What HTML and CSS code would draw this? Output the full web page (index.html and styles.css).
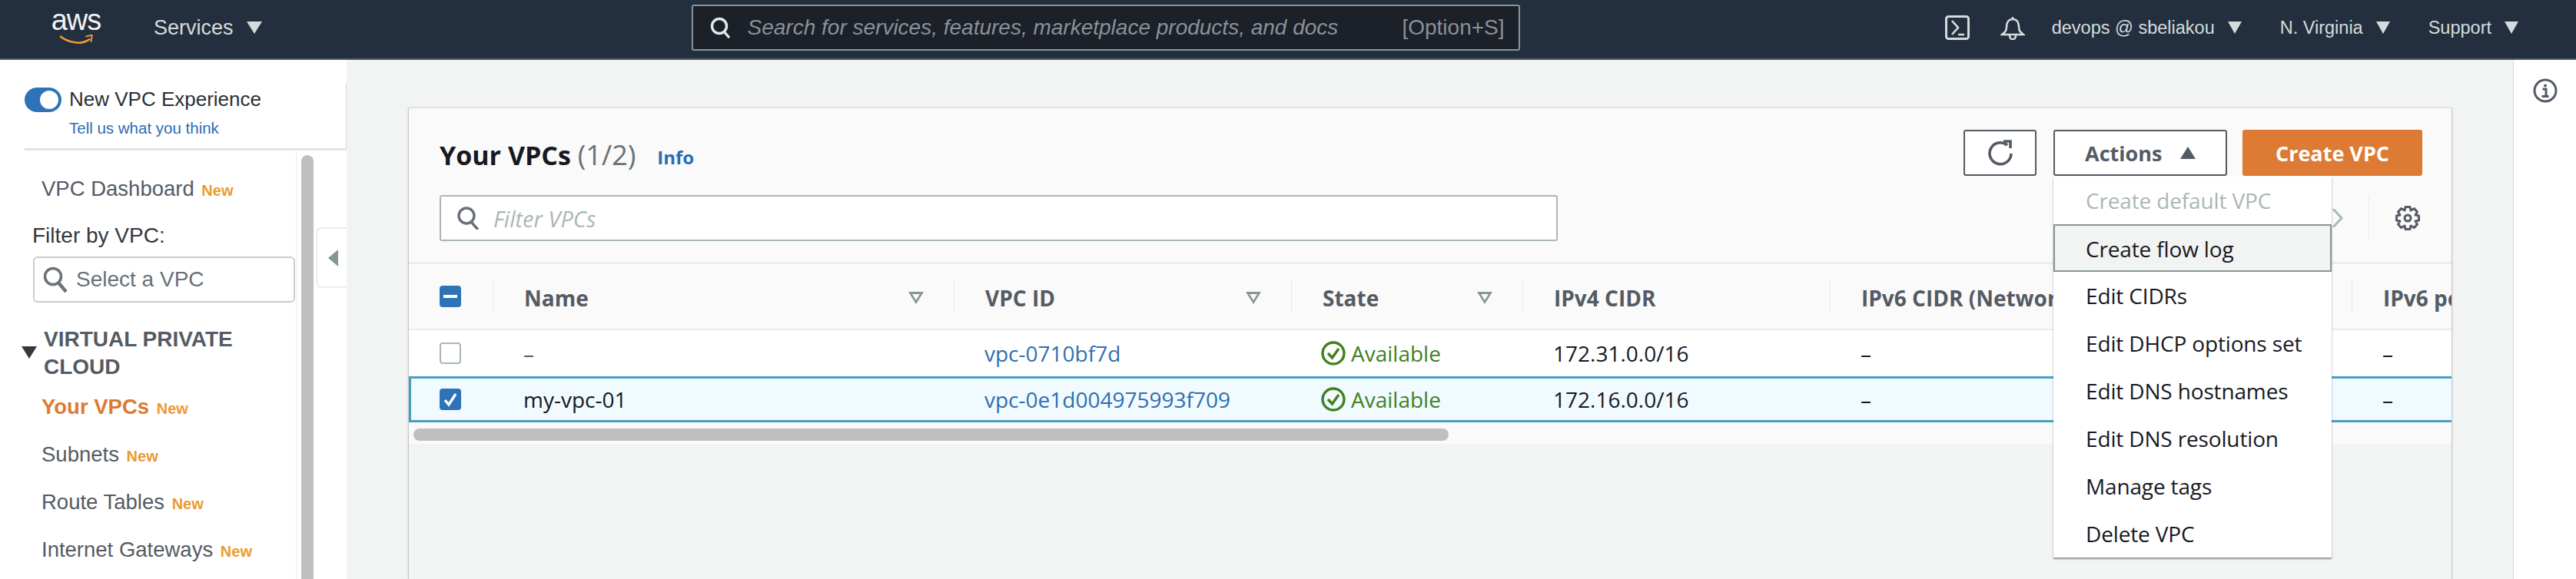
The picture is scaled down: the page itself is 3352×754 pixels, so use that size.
FILE: index.html
```html
<!DOCTYPE html>
<html lang="en">
<head>
    <meta charset="UTF-8">
    <meta name="viewport" content="width=device-width, initial-scale=1.0">
    <title>VPC Management Console</title>
    <link rel="stylesheet" href="styles.css">
</head>
<body>
    <header class="topbar">
        <a class="logo">
            <span class="logo-text">aws</span>
            <svg class="logo-smile" viewBox="0 0 66 20" width="66" height="20">
                <path d="M1 3 C14 14 32 18 45 16 C51 15 56 13 61 9" fill="none" stroke="#ec9a32" stroke-width="4"/>
                <path d="M52 4 L65 1 L63 15" fill="none" stroke="#ec9a32" stroke-width="3"/>
            </svg>
        </a>
        <span class="nav-link services">Services <i class="caret caret-big"></i></span>
        <div class="search">
            <svg class="search-icon" viewBox="0 0 28 28" width="28" height="28">
                <circle cx="12" cy="12" r="9.5" fill="none" stroke="#e4e8e8" stroke-width="3.4"/>
                <path d="M18 19 L25 27" stroke="#e4e8e8" stroke-width="3.4"/>
            </svg>
            <span class="search-text">Search for services, features, marketplace products, and docs</span>
            <span class="search-key">[Option+S]</span>
        </div>
        <div class="topbar-right">
            <svg class="top-icon" viewBox="0 0 32 32" width="32" height="32">
                <rect x="1.5" y="1.5" width="29" height="29" rx="3" fill="none" stroke="#d5dbdb" stroke-width="3"/>
                <path d="M9 7 L17 16 L9 25 M17 25 H25" fill="none" stroke="#d5dbdb" stroke-width="2.6"/>
            </svg>
            <svg class="top-icon bell" viewBox="0 0 32 32" width="32" height="32">
                <path d="M16 2 V5 M16 5 C10 5 8 10 8 15 C8 20 6 22 2 25 H30 C26 22 24 20 24 15 C24 10 22 5 16 5 Z" fill="none" stroke="#d5dbdb" stroke-width="2.6"/>
                <path d="M12 26 C12 33 20 33 20 26" fill="none" stroke="#d5dbdb" stroke-width="2.6"/>
            </svg>
            <span class="nav-link user">devops @ sbeliakou <i class="caret"></i></span>
            <span class="nav-link region">N. Virginia <i class="caret"></i></span>
            <span class="nav-link support">Support <i class="caret"></i></span>
        </div>
    </header>

    <div class="page">
        <aside class="sidebar">
            <div class="experience">
                <span class="toggle"></span>
                <div>
                    <div class="experience-title">New VPC Experience</div>
                    <a class="experience-link">Tell us what you think</a>
                </div>
            </div>
            <div class="side-body">
                <nav class="side-nav">
                    <a class="side-item">VPC Dashboard <span class="new">New</span></a>
                    <div class="filter-label">Filter by VPC:</div>
                    <div class="vpc-select">
                        <svg viewBox="0 0 34 34" width="34" height="34">
                            <circle cx="14" cy="13" r="10.5" fill="none" stroke="#6b7278" stroke-width="3.6"/>
                            <path d="M21 21 L31 33" stroke="#6b7278" stroke-width="4.4"/>
                        </svg>
                        <span>Select a VPC</span>
                    </div>
                    <div class="side-section"><i class="section-caret"></i>VIRTUAL PRIVATE<br>CLOUD</div>
                    <a class="side-item active">Your VPCs <span class="new">New</span></a>
                    <a class="side-item">Subnets <span class="new">New</span></a>
                    <a class="side-item">Route Tables <span class="new">New</span></a>
                    <a class="side-item">Internet Gateways <span class="new">New</span></a>
                </nav>
                <div class="side-scroll"></div>
            </div>
            <div class="collapse-tab"><i></i></div>
        </aside>

        <main class="main">
            <section class="card">
                <div class="card-head">
                    <div class="title-row">
                        <h1 class="title">Your VPCs <span class="count">(1/2)</span></h1>
                        <a class="info">Info</a>
                        <div class="actions">
                            <button class="btn btn-icon">
                                <svg viewBox="0 0 34 34" width="34" height="34">
                                    <path d="M26 7 A14 14 0 1 0 31 18" fill="none" stroke="#545b64" stroke-width="3.6"/>
                                    <path d="M21 2 H30 V11" fill="none" stroke="#545b64" stroke-width="3.6"/>
                                </svg>
                            </button>
                            <div class="actions-wrap">
                                <button class="btn btn-actions">Actions <i class="caret-up"></i></button>
                                <ul class="menu">
                                    <li class="menu-item disabled">Create default VPC</li>
                                    <li class="menu-item hover">Create flow log</li>
                                    <li class="menu-item">Edit CIDRs</li>
                                    <li class="menu-item">Edit DHCP options set</li>
                                    <li class="menu-item">Edit DNS hostnames</li>
                                    <li class="menu-item">Edit DNS resolution</li>
                                    <li class="menu-item">Manage tags</li>
                                    <li class="menu-item">Delete VPC</li>
                                </ul>
                            </div>
                            <button class="btn btn-primary">Create VPC</button>
                        </div>
                    </div>
                    <div class="filter-row">
                        <div class="filter">
                            <svg viewBox="0 0 30 30" width="30" height="30">
                                <circle cx="13" cy="12" r="10" fill="none" stroke="#687078" stroke-width="3.4"/>
                                <path d="M19 20 L28 30" stroke="#687078" stroke-width="3.4"/>
                            </svg>
                            <span>Filter VPCs</span>
                        </div>
                        <div class="pager">
                            <svg viewBox="0 0 14 24" width="14" height="24">
                                <path d="M1 0 L12 12 L1 24" fill="none" stroke="#aab7b8" stroke-width="3"/>
                            </svg>
                            <span class="pager-sep"></span>
                            <svg class="gear" viewBox="0 0 32 32" width="32" height="32">
                                <circle cx="16" cy="16" r="4" fill="none" stroke="#545b64" stroke-width="3"/>
                                <path d="M13 1.5 H19 L20 6 L24.500 3.500 L28.500 8 L26 12 L30.500 13 V19 L26 20 L28.500 24 L24.500 28.500 L20 26 L19 30.500 H13 L12 26 L7.500 28.500 L3.500 24 L6 20 L1.500 19 V13 L6 12 L3.500 8 L7.500 3.500 L12 6 Z" fill="none" stroke="#545b64" stroke-width="3" stroke-linejoin="round"/>
                            </svg>
                        </div>
                    </div>
                </div>

                <div class="table-wrap">
                    <table class="table">
                        <colgroup>
                            <col class="col-check">
                            <col class="col-name">
                            <col class="col-id">
                            <col class="col-state">
                            <col class="col-ipv4">
                            <col class="col-ipv6">
                            <col class="col-pool">
                        </colgroup>
                        <thead>
                            <tr>
                                <th><span class="check check-mixed"><i></i></span></th>
                                <th><div class="th-in">Name <i class="sort"></i></div></th>
                                <th><div class="th-in">VPC ID <i class="sort"></i></div></th>
                                <th><div class="th-in">State <i class="sort"></i></div></th>
                                <th><div class="th-in">IPv4 CIDR</div></th>
                                <th><div class="th-in">IPv6 CIDR (Network border group)</div></th>
                                <th><div class="th-in">IPv6 pool</div></th>
                            </tr>
                        </thead>
                        <tbody>
                            <tr>
                                <td><span class="check"></span></td>
                                <td class="muted">–</td>
                                <td><a class="link">vpc-0710bf7d</a></td>
                                <td>
                                    <span class="state">
                                        <svg viewBox="0 0 32 32" width="32" height="32">
                                            <circle cx="16" cy="16" r="14" fill="none" stroke="#41801f" stroke-width="3.4"/>
                                            <path d="M9 16 L14.500 22 L23 10" fill="none" stroke="#41801f" stroke-width="3.4"/>
                                        </svg>
                                        Available
                                    </span>
                                </td>
                                <td>172.31.0.0/16</td>
                                <td>–</td>
                                <td>–</td>
                            </tr>
                            <tr class="selected">
                                <td><span class="check check-on">
                                    <svg viewBox="0 0 28 28" width="28" height="28">
                                        <path d="M7 15 L12 21 L21 7" fill="none" stroke="#fff" stroke-width="3.4"/>
                                    </svg>
                                </span></td>
                                <td>my-vpc-01</td>
                                <td><a class="link">vpc-0e1d004975993f709</a></td>
                                <td>
                                    <span class="state">
                                        <svg viewBox="0 0 32 32" width="32" height="32">
                                            <circle cx="16" cy="16" r="14" fill="none" stroke="#41801f" stroke-width="3.4"/>
                                            <path d="M9 16 L14.500 22 L23 10" fill="none" stroke="#41801f" stroke-width="3.4"/>
                                        </svg>
                                        Available
                                    </span>
                                </td>
                                <td>172.16.0.0/16</td>
                                <td>–</td>
                                <td>–</td>
                            </tr>
                        </tbody>
                    </table>
                    <div class="hscroll"><div class="hscroll-thumb"></div></div>
                </div>
            </section>
        </main>

        <aside class="help">
            <svg viewBox="0 0 32 32" width="32" height="32">
                <circle cx="16" cy="16" r="14" fill="none" stroke="#545b64" stroke-width="3"/>
                <circle cx="16" cy="9.500" r="2" fill="#545b64"/>
                <path d="M12.500 14 H17 V23 M11.500 23.500 H20.500" fill="none" stroke="#545b64" stroke-width="3"/>
            </svg>
        </aside>
    </div>
</body>
</html>
```

FILE: styles.css
```css
* {
    box-sizing: border-box;
}

html,
body {
    margin: 0;
    height: 754px;
    overflow: hidden;
}

body {
    font-family: "Liberation Sans", Arial, sans-serif;
    font-size: 28px;
    color: #16191f;
    background-color: #f2f3f3;
}

/* top bar */
.topbar {
    display: flex;
    align-items: center;
    height: 78px;
    padding: 0 75px 4px 66px;
    background-color: #232f3e;
    border-bottom: 2px solid #545b64;
}

.logo {
    display: flex;
    flex-direction: column;
    align-items: center;
    width: 66px;
    height: 44px;
}

.logo-text {
    height: 24px;
    font-size: 38px;
    line-height: 24px;
    letter-spacing: -1px;
    color: #f2f3f3;
}

.logo-smile {
    margin-top: 7px;
}

.nav-link {
    display: flex;
    align-items: center;
    gap: 17px;
    font-size: 23.5px;
    color: #d5dbdb;
    white-space: nowrap;
}

.services {
    gap: 17px;
    margin-left: 68px;
    font-size: 27px;
}

.caret {
    display: inline-block;
    border-left: 9px solid transparent;
    border-right: 9px solid transparent;
    border-top: 16px solid #d5dbdb;
}

.caret-big {
    border-left-width: 10px;
    border-right-width: 10px;
}

.search {
    display: flex;
    align-items: center;
    width: 1078px;
    height: 60px;
    margin-left: 559px;
    padding: 0 18px 0 22px;
    font-size: 28px;
    color: #8b9195;
    background-color: #1b2029;
    border: 2px solid #879596;
    border-radius: 3px;
}

.search-icon {
    flex: none;
}

.search-text {
    margin-left: 21px;
    font-style: italic;
    white-space: nowrap;
}

.search-key {
    margin-left: auto;
    white-space: nowrap;
}

.topbar-right {
    display: flex;
    align-items: center;
    margin-left: auto;
}

.bell {
    margin-left: 40px;
}

.user {
    margin-left: 35px;
}

.region {
    margin-left: 50px;
}

.support {
    margin-left: 50px;
}

/* page columns */
.page {
    display: flex;
    height: 676px;
}

.sidebar {
    position: relative;
    flex: none;
    width: 451px;
    background-color: #ffffff;
}

.main {
    flex: 1;
    min-width: 0;
    padding: 63px 79px 0 80px;
    border-right: 1px solid #d5dbdb;
}

.help {
    flex: none;
    width: 81px;
    padding: 24px 0 0 25px;
    background-color: #ffffff;
}

/* sidebar */
.experience {
    display: flex;
    gap: 10px;
    height: 86px;
    margin: 30px 0 0 32px;
    border-right: 1px solid #d5dbdb;
}

.toggle {
    position: relative;
    flex: none;
    width: 48px;
    height: 32px;
    margin-top: 6px;
    background-color: #2e73b8;
    border-radius: 16px;
}

.toggle::after {
    content: "";
    position: absolute;
    top: 4px;
    right: 4px;
    width: 24px;
    height: 24px;
    background-color: #ffffff;
    border-radius: 50%;
}

.experience-title {
    margin-top: 5px;
    font-size: 26px;
    color: #2b2f36;
    line-height: 32px;
}

.experience-link {
    display: block;
    margin-top: 9px;
    font-size: 20.5px;
    line-height: 26px;
    color: #2b6cb4;
}

.side-body {
    display: flex;
    height: 560px;
    margin-left: 0;
}

.side-body::before {
    content: "";
    position: absolute;
    top: 115px;
    left: 32px;
    right: 0;
    height: 3px;
    background-color: #e1e3e3;
}

.side-nav {
    flex: none;
    width: 386px;
    padding-top: 21px;
    color: #545b64;
    border-right: 1px solid #eaeded;
}

.side-item {
    display: block;
    height: 62px;
    padding-left: 54px;
    font-size: 27.5px;
    line-height: 62px;
    white-space: nowrap;
}

.side-item.active {
    font-weight: bold;
    color: #dd7a33;
}

.new {
    margin-left: 2px;
    font-size: 20px;
    font-weight: bold;
    color: #ec9a32;
}

.filter-label {
    height: 48px;
    margin-top: 9px;
    padding-left: 42px;
    line-height: 42px;
    color: #33383f;
}

.vpc-select {
    display: flex;
    align-items: center;
    gap: 10px;
    width: 341px;
    height: 60px;
    margin-left: 43px;
    padding-left: 10px;
    color: #687078;
    background-color: #ffffff;
    border: 2px solid #c8cccc;
    border-radius: 6px;
}

.side-section {
    position: relative;
    margin-top: 30px;
    padding-left: 57px;
    font-weight: bold;
    line-height: 36px;
    color: #545b64;
}

.section-caret {
    position: absolute;
    top: 27px;
    left: 28px;
    border-left: 10px solid transparent;
    border-right: 10px solid transparent;
    border-top: 16px solid #33383f;
}

.side-section + .side-item {
    margin-top: 3px;
}

.side-scroll {
    flex: none;
    width: 16px;
    margin: 8px 0 0 6px;
    background-color: #bfbfbf;
    border-radius: 8px 8px 0 0;
}

.collapse-tab {
    position: absolute;
    top: 218px;
    left: 411px;
    display: flex;
    align-items: center;
    width: 40px;
    height: 79px;
    padding-left: 14px;
    background-color: #ffffff;
    border: 2px solid #eaeded;
    border-right: 0;
    border-radius: 8px 0 0 8px;
}

.collapse-tab i {
    border-top: 11px solid transparent;
    border-bottom: 11px solid transparent;
    border-right: 13px solid #879596;
}

/* card */
.card {
    height: 100%;
    background-color: #f2f3f3;
    border-left: 1px solid #c5c8c8;
    border-right: 1px solid #c5c8c8;
    box-shadow: 0 -1px 2px rgba(0, 28, 36, .15);
}

.card-head {
    height: 203px;
    padding: 28px 38px 0 40px;
    background-color: #fafafa;
    border-bottom: 3px solid #eaeded;
}

.title-row {
    display: flex;
    align-items: center;
    height: 60px;
}

.title {
    margin: 4px 0 0;
    font-family: "Open Sans", sans-serif;
    font-size: 34px;
    font-weight: 700;
    white-space: nowrap;
}

.count {
    font-size: 36px;
    font-weight: 400;
    color: #687078;
}

.info {
    margin: 10px 0 0 28px;
    font-family: "Open Sans", sans-serif;
    font-size: 24px;
    font-weight: 700;
    color: #2b6cb4;
}

.actions {
    display: flex;
    gap: 20px;
    margin-left: auto;
}

.actions-wrap {
    position: relative;
}

.btn {
    display: flex;
    align-items: center;
    justify-content: center;
    height: 60px;
    padding: 0;
    font-family: "Open Sans", sans-serif;
    font-size: 27px;
    font-weight: 700;
    color: #545b64;
    background-color: #ffffff;
    border: 2px solid #545b64;
    border-radius: 3px;
}

.btn-icon {
    width: 95px;
    margin-right: 2px;
}

.btn-actions {
    justify-content: flex-start;
    gap: 24px;
    width: 226px;
    padding-left: 39px;
}

.btn-primary {
    width: 234px;
    color: #ffffff;
    background-color: #dd7a33;
    border-color: #dd7a33;
}

.caret-up {
    border-left: 10px solid transparent;
    border-right: 10px solid transparent;
    border-bottom: 16px solid #545b64;
}

.menu {
    position: absolute;
    top: 61px;
    left: 0;
    z-index: 5;
    width: 362px;
    margin: 0;
    padding: 0;
    list-style: none;
    font-family: "Open Sans", sans-serif;
    letter-spacing: -.15px;
    background-color: #ffffff;
    box-shadow: 0 2px 2px rgba(0, 28, 36, .45);
}

.menu-item {
    height: 62px;
    padding-left: 42px;
    line-height: 63px;
    white-space: nowrap;
}

.menu-item.disabled {
    color: #aab7b8;
}

.menu-item.hover {
    padding-left: 40px;
    line-height: 60px;
    background-color: #f2f3f3;
    border: 2px solid #879596;
}

.filter-row {
    display: flex;
    align-items: center;
    height: 60px;
    margin-top: 25px;
}

.filter {
    display: flex;
    align-items: center;
    gap: 18px;
    width: 1455px;
    height: 60px;
    padding-left: 20px;
    font-family: "Open Sans", sans-serif;
    font-size: 29px;
    font-style: italic;
    color: #aab7b8;
    background-color: #ffffff;
    border: 2px solid #aab7b8;
    border-radius: 3px;
}

.pager {
    display: flex;
    align-items: center;
    margin-left: auto;
    margin-right: 3px;
}

.pager-sep {
    width: 1px;
    height: 60px;
    margin: 0 34px 0 33px;
    background-color: #eaeded;
}

/* table */
.table-wrap {
    position: relative;
    overflow: hidden;
    background-color: #fafafa;
}

.table {
    width: 2868px;
    table-layout: fixed;
    border-collapse: separate;
    border-spacing: 0;
    font-family: "Open Sans", sans-serif;
}

.col-check { width: 109px; }
.col-name { width: 600px; }
.col-id { width: 439px; }
.col-state { width: 301px; }
.col-ipv4 { width: 400px; }
.col-ipv6 { width: 679px; }
.col-pool { width: 340px; }

.table th {
    height: 86px;
    padding: 0;
    text-align: left;
    font-weight: 700;
    color: #545b64;
    background-color: #fafafa;
    border-bottom: 2px solid #eaeded;
    white-space: nowrap;
}

.table th:first-child,
.table td:first-child {
    padding-left: 40px;
}

.th-in {
    display: flex;
    align-items: center;
    justify-content: space-between;
    height: 42px;
    padding: 3px 39px 0 40px;
    border-left: 1px solid #e7e9e9;
}

.sort {
    border-left: 10px solid transparent;
    border-right: 10px solid transparent;
    border-top: 16px solid #879596;
    position: relative;
}

.sort::after {
    content: "";
    position: absolute;
    top: -13px;
    left: -5px;
    border-left: 5px solid transparent;
    border-right: 5px solid transparent;
    border-top: 8px solid #fafafa;
}

.table td {
    height: 60px;
    padding: 0 0 0 40px;
    background-color: #ffffff;
    white-space: nowrap;
}

.selected td {
    height: 60px;
    background-color: #f1faff;
    border-top: 3px solid #4a9dc3;
    border-bottom: 3px solid #4a9dc3;
}

.selected td:first-child {
    padding-left: 37px;
    border-left: 3px solid #4a9dc3;
}

.muted {
    color: #545b64;
}

.link {
    color: #2f6fb0;
}

.state {
    display: flex;
    align-items: center;
    gap: 7px;
    margin-left: -1px;
    color: #41801f;
}

.check {
    display: block;
    width: 28px;
    height: 28px;
    background-color: #ffffff;
    border: 2px solid #aab7b8;
    border-radius: 4px;
}

.check-on,
.check-mixed {
    display: flex;
    align-items: center;
    justify-content: center;
    background-color: #2e73b8;
    border: 0;
}

.check-mixed i {
    width: 18px;
    height: 4px;
    background-color: #ffffff;
}

.hscroll {
    height: 28px;
    padding: 8px 0 0 6px;
}

.hscroll-thumb {
    width: 1347px;
    height: 16px;
    background-color: #bfbfbf;
    border-radius: 8px;
}
```
